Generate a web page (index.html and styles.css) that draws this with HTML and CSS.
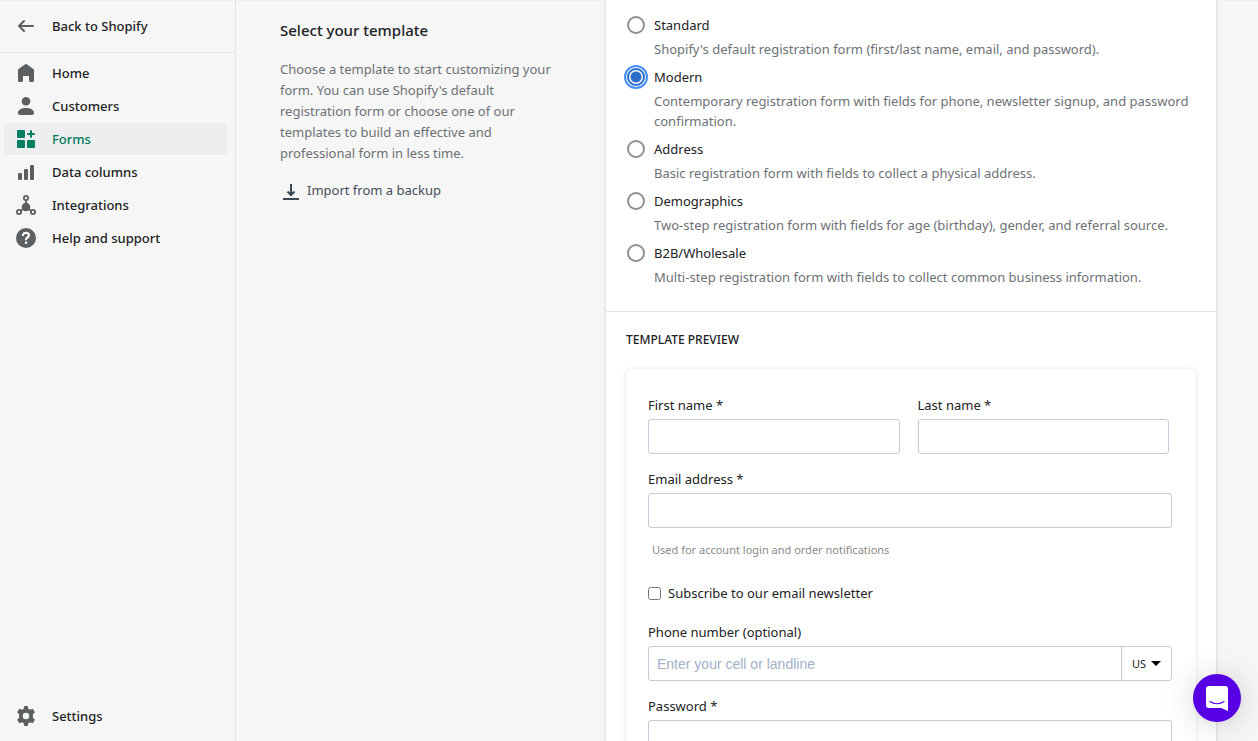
FILE: index.html
```
<!DOCTYPE html>
<html lang="en">
<head>
<meta charset="utf-8">
<meta name="viewport" content="width=device-width, initial-scale=1">
<title>Select your template</title>
<link rel="stylesheet" href="styles.css">
</head>
<body>
<div class="app">
  <aside class="sidebar">
    <a class="back" href="#">
      <svg class="icon" viewBox="0 0 20 20"><path d="M17 9H5.414l3.293-3.293a.999.999 0 1 0-1.414-1.414l-5 5a.999.999 0 0 0 0 1.414l5 5a.997.997 0 0 0 1.414 0 .999.999 0 0 0 0-1.414L5.414 11H17a1 1 0 1 0 0-2z"/></svg>
      Back to Shopify
    </a>
    <nav class="nav">
      <a class="nav-item" href="#">
        <svg class="icon" viewBox="0 0 20 20"><path d="M18 7.261V17.5c0 .841-.672 1.5-1.5 1.5h-2c-.828 0-1.5-.659-1.5-1.5V13H7v4.477C7 18.318 6.328 19 5.5 19h-2C2.672 19 2 18.318 2 17.477V7.261a1.5 1.5 0 0 1 .615-1.21l6.59-4.82a1.481 1.481 0 0 1 1.59 0l6.59 4.82A1.5 1.5 0 0 1 18 7.261z"/></svg>
        Home
      </a>
      <a class="nav-item" href="#">
        <svg class="icon" viewBox="0 0 20 20"><circle cx="10" cy="5.200" r="4.300"/><path d="M10 12c-4 0-7.500 1.500-8 4.200-.3 1.600.6 2.800 2.200 2.800h11.600c1.600 0 2.500-1.200 2.200-2.800C17.500 13.500 14 12 10 12z"/></svg>
        Customers
      </a>
      <a class="nav-item nav-item-active" href="#">
        <svg class="icon" viewBox="0 0 20 20"><path d="M2 1h6a1 1 0 0 1 1 1v6a1 1 0 0 1-1 1H2a1 1 0 0 1-1-1V2a1 1 0 0 1 1-1zM2 11h6a1 1 0 0 1 1 1v6a1 1 0 0 1-1 1H2a1 1 0 0 1-1-1v-6a1 1 0 0 1 1-1zM12 11h6a1 1 0 0 1 1 1v6a1 1 0 0 1-1 1h-6a1 1 0 0 1-1-1v-6a1 1 0 0 1 1-1zM14 2a1 1 0 1 1 2 0v2h2a1 1 0 1 1 0 2h-2v2a1 1 0 1 1-2 0V6h-2a1 1 0 1 1 0-2h2z"/></svg>
        Forms
      </a>
      <a class="nav-item" href="#">
        <svg class="icon" viewBox="0 0 20 20"><rect x="2" y="11" width="4" height="7" rx="1.300"/><rect x="8" y="7" width="4" height="11" rx="1.300"/><rect x="14" y="3" width="4" height="15" rx="1.300"/></svg>
        Data columns
      </a>
      <a class="nav-item" href="#">
        <svg class="icon" viewBox="0 0 20 20"><circle cx="10" cy="12" r="4.300"/><path class="stroke" d="M10 5v6M5 15.800l4-3M15 15.800l-4-3"/><circle class="ring" cx="10" cy="3" r="2.100"/><circle class="ring" cx="3" cy="17" r="2.100"/><circle class="ring" cx="17" cy="17" r="2.100"/></svg>
        Integrations
      </a>
      <a class="nav-item" href="#">
        <svg class="icon" viewBox="0 0 20 20"><circle cx="10" cy="10" r="10"/><path class="mark" d="M7 7.200C7.200 5.500 8.400 4.800 10 4.800c1.700 0 3 1 3 2.500 0 2.200-3 2.200-3 4.200"/><circle class="dot" cx="10" cy="14.800" r="1.300"/></svg>
        Help and support
      </a>
    </nav>
    <a class="nav-item nav-settings" href="#">
      <svg class="icon" viewBox="0 0 20 20"><path fill-rule="evenodd" d="M8.300 0h3.400l.6 2.700 1.700 1 2.700-.9 2.200 3.500-2 1.900v3.600l2 1.900-2.200 3.500-2.700-.9-1.700 1-.6 2.700H8.300l-.6-2.700-1.700-1-2.700.9-2.200-3.500 2-1.900V8.200l-2-1.900 2.200-3.500 2.700.9 1.700-1zM10 6.700a3.300 3.300 0 1 0 0 6.600 3.300 3.300 0 0 0 0-6.600z"/></svg>
      Settings
    </a>
  </aside>

  <main class="main">
    <section class="intro">
      <h1 class="title">Select your template</h1>
      <p class="lead">Choose a template to start customizing your form. You can use Shopify's default registration form or choose one of our templates to build an effective and professional form in less time.</p>
      <button class="import" type="button">
        <svg class="import-icon" viewBox="0 0 16 16"><path d="M8 0v11M4.500 7.500L8 11l3.500-3.500M0 15h16"/></svg>
        Import from a backup
      </button>
    </section>

    <div class="card">
      <fieldset class="choices">
        <div class="choice">
          <input class="radio" type="radio" name="template" id="standard" aria-describedby="standard-help">
          <label class="choice-label" for="standard">Standard</label>
          <p class="choice-help" id="standard-help">Shopify's default registration form (first/last name, email, and password).</p>
        </div>
        <div class="choice">
          <input class="radio" type="radio" name="template" id="modern" aria-describedby="modern-help" checked>
          <label class="choice-label" for="modern">Modern</label>
          <p class="choice-help" id="modern-help">Contemporary registration form with fields for phone, newsletter signup, and password confirmation.</p>
        </div>
        <div class="choice">
          <input class="radio" type="radio" name="template" id="address" aria-describedby="address-help">
          <label class="choice-label" for="address">Address</label>
          <p class="choice-help" id="address-help">Basic registration form with fields to collect a physical address.</p>
        </div>
        <div class="choice">
          <input class="radio" type="radio" name="template" id="demographics" aria-describedby="demographics-help">
          <label class="choice-label" for="demographics">Demographics</label>
          <p class="choice-help" id="demographics-help">Two-step registration form with fields for age (birthday), gender, and referral source.</p>
        </div>
        <div class="choice">
          <input class="radio" type="radio" name="template" id="b2b" aria-describedby="b2b-help">
          <label class="choice-label" for="b2b">B2B/Wholesale</label>
          <p class="choice-help" id="b2b-help">Multi-step registration form with fields to collect common business information.</p>
        </div>
      </fieldset>

      <section class="preview">
        <h2 class="preview-title">TEMPLATE PREVIEW</h2>
        <form class="form">
          <div class="form-row">
            <div class="field">
              <label for="first">First name *</label>
              <input class="input" id="first" type="text">
            </div>
            <div class="field">
              <label for="last">Last name *</label>
              <input class="input" id="last" type="text">
            </div>
          </div>
          <div class="field">
            <label for="email">Email address *</label>
            <input class="input" id="email" type="email" aria-describedby="email-help">
            <p class="field-help" id="email-help">Used for account login and order notifications</p>
          </div>
          <div class="check">
            <input class="checkbox" id="subscribe" type="checkbox">
            <label for="subscribe">Subscribe to our email newsletter</label>
          </div>
          <div class="field">
            <label for="phone">Phone number (optional)</label>
            <div class="phone">
              <input class="phone-input" id="phone" type="tel" placeholder="Enter your cell or landline">
              <button class="country" type="button">US
                <svg class="caret" viewBox="0 0 10 5"><path d="M0 0h10L5 5z"/></svg>
              </button>
            </div>
          </div>
          <div class="field">
            <label for="password">Password *</label>
            <input class="input" id="password" type="password">
          </div>
        </form>
      </section>
    </div>
  </main>
</div>
<button class="chat" type="button" aria-label="Open chat">
  <svg class="chat-icon" viewBox="0 0 22 25"><path class="chat-body" d="M3 0h16a3 3 0 0 1 3 3v22c-2.500-.9-4.500-2-6.500-3H3a3 3 0 0 1-3-3V3a3 3 0 0 1 3-3z"/><path class="chat-smile" d="M4 15.500c4 3 10 3 14 0"/></svg>
</button>
</body>
</html>
```

FILE: styles.css
```
* {
  box-sizing: border-box;
}

body {
  margin: 0;
  overflow: hidden;
  background: #f6f6f6;
  color: #202223;
  font: 13px/20px "Noto Sans", "Open Sans", sans-serif;
}

h1, h2, p, fieldset {
  margin: 0;
  padding: 0;
  border: 0;
}

button, input {
  font: inherit;
  color: inherit;
}

.app {
  display: flex;
  height: 100vh;
  box-shadow: inset 0 1px 0 #f0f0f0;
}

.sidebar {
  display: flex;
  flex: 0 0 236px;
  flex-direction: column;
  border-right: 1px solid #e1e3e5;
}

.back, .nav-item {
  display: flex;
  align-items: center;
  gap: 16px;
  color: #202223;
  font-weight: 500;
  text-decoration: none;
}

.back {
  height: 53px;
  padding: 0 16px;
  border-bottom: 1px solid #e1e3e5;
}

.nav {
  display: flex;
  flex: 1;
  flex-direction: column;
  gap: 1px;
  padding-top: 4px;
}

.nav-item {
  height: 32px;
  margin: 0 8px 0 4px;
  padding: 0 12px;
  border-radius: 4px;
}

.nav-item-active {
  background: #edeeef;
  color: #007a5c;
}

.nav-settings {
  margin-bottom: 9px;
}

.icon {
  flex: none;
  width: 20px;
  height: 20px;
  fill: #5c5f62;
}

.nav-item-active .icon {
  fill: #008060;
}

.stroke, .ring {
  fill: none;
  stroke: #5c5f62;
  stroke-width: 1.8;
}

.ring {
  fill: #f6f6f6;
}

.mark {
  fill: none;
  stroke: #f6f6f6;
  stroke-width: 2.2;
  stroke-linecap: round;
}

.dot {
  fill: #f6f6f6;
}

.main {
  display: grid;
  flex: 1;
  grid-template-columns: minmax(0, 1fr) minmax(0, 2fr);
  gap: 21px;
  min-width: 0;
  padding: 0 42px 0 44px;
  overflow: hidden;
}

.intro {
  padding: 20px 20px 0 0;
}

.title {
  font-size: 15px;
  font-weight: 500;
}

.lead {
  margin-top: 19px;
  color: #6d7175;
  line-height: 21px;
}

.import {
  display: flex;
  align-items: center;
  gap: 8px;
  margin-top: 16px;
  padding: 0 3px;
  border: 0;
  background: none;
  color: #454f5b;
}

.import-icon {
  width: 16px;
  height: 16px;
  margin-top: 4px;
  fill: none;
  stroke: #3b4856;
  stroke-width: 2;
}

.card {
  min-width: 0;
  background: #fff;
  box-shadow: 0 0 4px rgba(23, 24, 24, 0.1), 0 0 1px rgba(0, 0, 0, 0.2);
}

.choices {
  display: flex;
  flex-direction: column;
  gap: 4px;
  padding: 11px 20px 24px;
}

.choice {
  display: grid;
  grid-template-columns: 20px minmax(0, 1fr);
  column-gap: 8px;
  align-items: center;
}

.radio {
  width: 18px;
  height: 18px;
  margin: 0 1px;
  border: 2px solid #8c9196;
  border-radius: 50%;
  background: #fff;
  appearance: none;
}

.radio:checked {
  border-color: #2c6ecb;
  background: radial-gradient(circle, #2c6ecb 5px, #fff 6px);
  box-shadow: 0 0 0 1px #fff, 0 0 0 3px #458fff;
}

.choice-label {
  padding: 4px 0;
}

.choice-help {
  grid-column: 2;
  color: #6d7175;
}

.preview {
  padding: 18px 20px;
  border-top: 1px solid #e1e3e5;
}

.preview-title {
  font-size: 12px;
  font-weight: 500;
}

.form {
  display: flex;
  flex-direction: column;
  gap: 15px;
  margin-top: 19px;
  padding: 26px 24px 26px 22px;
  border-radius: 6px;
  box-shadow: 0 0 4px rgba(0, 0, 0, 0.12);
}

.form-row {
  display: grid;
  grid-template-columns: 1fr 1fr;
  gap: 18px;
  padding-right: 3px;
}

.field {
  display: flex;
  flex-direction: column;
  gap: 4px;
  min-width: 0;
}

.input, .phone {
  width: 100%;
  height: 35px;
  border: 1px solid #c4cdd5;
  border-radius: 3px;
  background: #fff;
}

.input {
  padding: 0 8px;
}

.field-help {
  padding: 8px 4px 0;
  color: #8a8a8a;
  font-size: 11px;
}

.check {
  display: flex;
  align-items: center;
  gap: 7px;
  padding: 8px 0 4px;
}

.checkbox {
  width: 13px;
  height: 13px;
  margin: 0;
}

.phone {
  display: flex;
}

.phone-input {
  flex: 1;
  min-width: 0;
  padding: 0 8px;
  border: 0;
  background: none;
  font-family: "Liberation Sans", Arial, sans-serif;
  font-size: 14px;
}

.phone-input::placeholder {
  color: #a3b1c6;
}

.country {
  display: flex;
  align-items: center;
  gap: 5px;
  padding: 0 10px;
  border: 0;
  border-left: 1px solid #c4cdd5;
  background: none;
  font-size: 11px;
}

.caret {
  width: 10px;
  height: 5px;
}

.chat {
  position: fixed;
  right: 17px;
  bottom: 19px;
  display: flex;
  align-items: center;
  justify-content: center;
  width: 48px;
  height: 48px;
  padding: 0;
  border: 0;
  border-radius: 50%;
  background: #5700e4;
  box-shadow: 0 1px 6px rgba(0, 0, 0, 0.06), 0 2px 32px rgba(0, 0, 0, 0.16);
}

.chat-icon {
  width: 22px;
  height: 25px;
}

.chat-body {
  fill: #fff;
}

.chat-smile {
  fill: none;
  stroke: #5700e4;
  stroke-width: 1.2;
  stroke-linecap: round;
}
```
